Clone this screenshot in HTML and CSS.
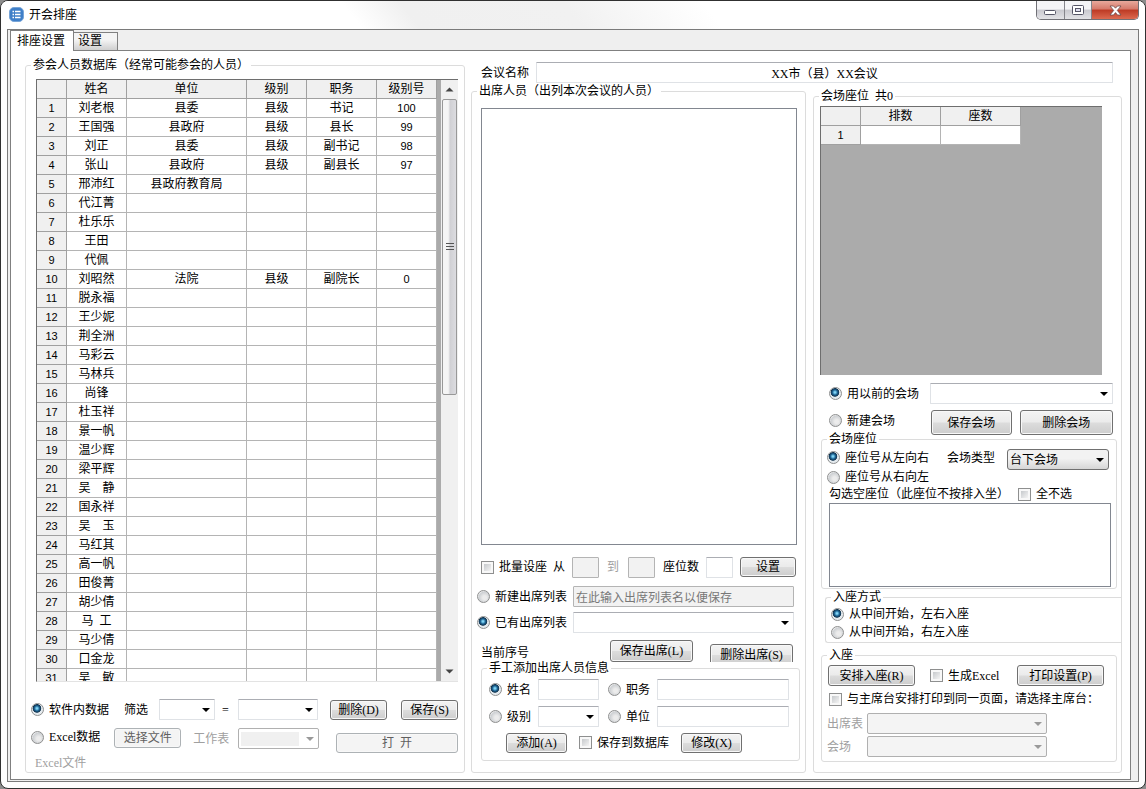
FILE: index.html
```html
<!DOCTYPE html>
<html lang="zh-CN">
<head>
<meta charset="utf-8">
<title>开会排座</title>
<link rel="stylesheet" href="styles.css">
</head>
<body>
<div class="window">
  <header class="titlebar">
    <svg class="app-icon" width="15" height="15" viewBox="0 0 15 15"><rect x="0.5" y="0.5" width="14" height="14" rx="4.5" fill="#3f7fc8" stroke="#78a5d8"/><path d="M6 4.5h5.500M6 7.500h5.500M6 10.500h5.500" stroke="#fff" stroke-width="1.300"/><path d="M3.500 4.500h1.500M3.500 7.500h1.500M3.500 10.500h1.500" stroke="#fff" stroke-width="1.300"/></svg>
    <h1 class="title">开会排座</h1>
    <div class="window-buttons">
      <button class="wbtn wbtn-min" aria-label="最小化"><svg width="13" height="7" viewBox="0 0 13 7"><rect x="0.500" y="1.500" width="11" height="4" rx="1" fill="#fff" stroke="#556"/></svg></button>
      <button class="wbtn wbtn-max" aria-label="最大化"><svg width="13" height="11" viewBox="0 0 13 11"><rect x="0.500" y="0.500" width="11" height="9" rx="1" fill="#fff" stroke="#556"/><rect x="3.500" y="3.500" width="5" height="3" fill="#dde" stroke="#556"/></svg></button>
      <button class="wbtn wbtn-close" aria-label="关闭"><svg width="13" height="11" viewBox="0 0 13 11"><path d="M1 1h3.500l2 2.200L8.500 1H12L8.300 5.400 12 10H8.500l-2-2.400L4.500 10H1l3.700-4.600z" fill="#fff" stroke="#6b4a4a" stroke-width="0.800"/></svg></button>
    </div>
  </header>
  <main class="client">
    <div class="tabs" role="tablist">
      <button class="tab tab-active" role="tab" aria-selected="true">排座设置</button>
      <button class="tab" role="tab" aria-selected="false">设置</button>
    </div>
    <div class="pane" role="tabpanel">
      <fieldset class="group database">
        <legend>参会人员数据库（经常可能参会的人员）</legend>
        <div class="grid-frame people-frame">
          <table class="sheet people">
            <colgroup><col class="c30"><col class="c60"><col class="c120"><col class="c60"><col class="c70"><col class="c60"></colgroup>
            <thead><tr><th></th><th>姓名</th><th>单位</th><th>级别</th><th>职务</th><th>级别号</th></tr></thead>
            <tbody>
              <tr><th>1</th><td>刘老根</td><td>县委</td><td>县级</td><td>书记</td><td class="num">100</td></tr>
              <tr><th>2</th><td>王国强</td><td>县政府</td><td>县级</td><td>县长</td><td class="num">99</td></tr>
              <tr><th>3</th><td>刘正</td><td>县委</td><td>县级</td><td>副书记</td><td class="num">98</td></tr>
              <tr><th>4</th><td>张山</td><td>县政府</td><td>县级</td><td>副县长</td><td class="num">97</td></tr>
              <tr><th>5</th><td>邢沛红</td><td>县政府教育局</td><td></td><td></td><td></td></tr>
              <tr><th>6</th><td>代江菁</td><td></td><td></td><td></td><td></td></tr>
              <tr><th>7</th><td>杜乐乐</td><td></td><td></td><td></td><td></td></tr>
              <tr><th>8</th><td>王田</td><td></td><td></td><td></td><td></td></tr>
              <tr><th>9</th><td>代佩</td><td></td><td></td><td></td><td></td></tr>
              <tr><th>10</th><td>刘昭然</td><td>法院</td><td>县级</td><td>副院长</td><td class="num">0</td></tr>
              <tr><th>11</th><td>脱永福</td><td></td><td></td><td></td><td></td></tr>
              <tr><th>12</th><td>王少妮</td><td></td><td></td><td></td><td></td></tr>
              <tr><th>13</th><td>荆全洲</td><td></td><td></td><td></td><td></td></tr>
              <tr><th>14</th><td>马彩云</td><td></td><td></td><td></td><td></td></tr>
              <tr><th>15</th><td>马林兵</td><td></td><td></td><td></td><td></td></tr>
              <tr><th>16</th><td>尚锋</td><td></td><td></td><td></td><td></td></tr>
              <tr><th>17</th><td>杜玉祥</td><td></td><td></td><td></td><td></td></tr>
              <tr><th>18</th><td>景一帆</td><td></td><td></td><td></td><td></td></tr>
              <tr><th>19</th><td>温少辉</td><td></td><td></td><td></td><td></td></tr>
              <tr><th>20</th><td>梁平辉</td><td></td><td></td><td></td><td></td></tr>
              <tr><th>21</th><td>吴　静</td><td></td><td></td><td></td><td></td></tr>
              <tr><th>22</th><td>国永祥</td><td></td><td></td><td></td><td></td></tr>
              <tr><th>23</th><td>吴　玉</td><td></td><td></td><td></td><td></td></tr>
              <tr><th>24</th><td>马红其</td><td></td><td></td><td></td><td></td></tr>
              <tr><th>25</th><td>高一帆</td><td></td><td></td><td></td><td></td></tr>
              <tr><th>26</th><td>田俊菁</td><td></td><td></td><td></td><td></td></tr>
              <tr><th>27</th><td>胡少倩</td><td></td><td></td><td></td><td></td></tr>
              <tr><th>28</th><td>马&nbsp; 工</td><td></td><td></td><td></td><td></td></tr>
              <tr><th>29</th><td>马少倩</td><td></td><td></td><td></td><td></td></tr>
              <tr><th>30</th><td>口金龙</td><td></td><td></td><td></td><td></td></tr>
              <tr><th>31</th><td>吴　敏</td><td></td><td></td><td></td><td></td></tr>
            </tbody>
          </table>
          <div class="scrollbar" aria-hidden="true">
            <svg class="sb-arrow" width="9" height="5" viewBox="0 0 9 5"><path d="M0.500 4.500L4.500 0.500l4 4z" fill="#444"/></svg>
            <div class="sb-thumb"><svg width="8" height="9" viewBox="0 0 8 9"><path d="M0 1.500h8M0 4.500h8M0 7.500h8" stroke="#555"/></svg></div>
            <div class="sb-rest"></div>
            <svg class="sb-arrow" width="9" height="5" viewBox="0 0 9 5"><path d="M0.500 0.500L4.500 4.500l4-4z" fill="#444"/></svg>
          </div>
        </div>
        <div class="row source-row">
          <label class="opt"><input type="radio" name="source" checked>软件内数据</label>
          <label class="filter-label" for="filter-field">筛选</label>
          <select id="filter-field" class="w56"></select>
          <span class="equals">=</span>
          <select id="filter-value" class="grow" aria-label="筛选值"></select>
          <button class="btn w57 gap-l">删除(D)</button>
          <button class="btn w57 gap-l2">保存(S)</button>
        </div>
        <div class="row excel-row">
          <label class="opt"><input type="radio" name="source">Excel数据</label>
          <button class="btn w67 gap-l2" disabled>选择文件</button>
          <label class="muted sheet-label" for="sheet">工作表</label>
          <select id="sheet" class="grow boxed" disabled></select>
          <button class="btn open-btn" disabled>打&nbsp; 开</button>
        </div>
        <div class="muted excel-file">Excel文件</div>
      </fieldset>

      <div class="meeting">
        <div class="row name-row">
          <label for="meeting-name">会议名称</label>
          <input id="meeting-name" class="grow name-input" type="text" value="XX市（县）XX会议">
        </div>
        <div class="meeting-columns">
          <fieldset class="group attend">
            <legend>出席人员（出列本次会议的人员）</legend>
            <div class="listbox attend-list" role="listbox" aria-label="出席人员"></div>
            <div class="row batch-row">
              <label class="opt"><input type="checkbox">批量设座</label>
              <label class="from" for="seat-from">从</label>
              <input id="seat-from" class="w27" type="text" disabled>
              <label class="muted to" for="seat-to">到</label>
              <input id="seat-to" class="w27" type="text" disabled>
              <label class="count" for="seat-count">座位数</label>
              <input id="seat-count" class="w27" type="text">
              <button class="btn grow set-btn">设置</button>
            </div>
            <div class="row new-list-row">
              <label class="opt"><input type="radio" name="list">新建出席列表</label>
              <input class="grow hint" type="text" value="在此输入出席列表名以便保存" aria-label="出席列表名" disabled>
            </div>
            <div class="row old-list-row">
              <label class="opt"><input type="radio" name="list" checked>已有出席列表</label>
              <select class="grow" aria-label="已有出席列表"></select>
            </div>
            <div class="row current-row">
              <span class="grow current">当前序号</span>
              <button class="btn w83">保存出席(L)</button>
              <button class="btn w83 cut">删除出席(S)</button>
            </div>
            <fieldset class="group manual">
              <legend>手工添加出席人员信息</legend>
              <div class="manual-grid">
                <label class="opt"><input type="radio" name="manual" checked>姓名</label>
                <input type="text" aria-label="姓名">
                <label class="opt second"><input type="radio" name="manual">职务</label>
                <input type="text" aria-label="职务">
                <label class="opt"><input type="radio" name="manual">级别</label>
                <select aria-label="级别"></select>
                <label class="opt second"><input type="radio" name="manual">单位</label>
                <input type="text" aria-label="单位">
              </div>
              <div class="row manual-actions">
                <button class="btn w61">添加(A)</button>
                <label class="opt"><input type="checkbox">保存到数据库</label>
                <button class="btn w61">修改(X)</button>
              </div>
            </fieldset>
          </fieldset>

          <fieldset class="group venue">
            <legend>会场座位&nbsp; 共0</legend>
            <div class="grid-frame venue-frame">
              <table class="sheet">
                <colgroup><col class="c40"><col class="c80"><col class="c80"></colgroup>
                <thead><tr><th></th><th>排数</th><th>座数</th></tr></thead>
                <tbody><tr><th>1</th><td></td><td></td></tr></tbody>
              </table>
            </div>
            <div class="row old-venue-row">
              <label class="opt"><input type="radio" name="venue" checked>用以前的会场</label>
              <select class="grow" aria-label="以前的会场"></select>
            </div>
            <div class="row new-venue-row">
              <label class="opt"><input type="radio" name="venue">新建会场</label>
              <button class="btn tall save-venue">保存会场</button>
              <button class="btn tall del-venue">删除会场</button>
            </div>
            <fieldset class="group seats">
              <legend>会场座位</legend>
              <div class="row dir-row">
                <label class="opt"><input type="radio" name="dir" checked>座位号从左向右</label>
                <label class="type-label" for="venue-type">会场类型</label>
                <select id="venue-type" class="grow raised"><option>台下会场</option></select>
              </div>
              <label class="opt dir-second"><input type="radio" name="dir">座位号从右向左</label>
              <div class="row empty-row">
                <span>勾选空座位（此座位不按排入坐）</span>
                <label class="opt"><input type="checkbox">全不选</label>
              </div>
              <div class="listbox seat-list" role="listbox" aria-label="空座位"></div>
            </fieldset>
            <fieldset class="group method">
              <legend>入座方式</legend>
              <label class="opt"><input type="radio" name="method" checked>从中间开始，左右入座</label>
              <label class="opt"><input type="radio" name="method">从中间开始，右左入座</label>
            </fieldset>
            <fieldset class="group seating">
              <legend>入座</legend>
              <div class="row seating-actions">
                <button class="btn w87">安排入座(R)</button>
                <label class="opt"><input type="checkbox">生成Excel</label>
                <button class="btn w87 print-btn">打印设置(P)</button>
              </div>
              <label class="opt same-page"><input type="checkbox">与主席台安排打印到同一页面，请选择主席台：</label>
              <div class="stage-grid">
                <label class="muted" for="stage-list">出席表</label>
                <select id="stage-list" disabled></select>
                <label class="muted" for="stage-venue">会场</label>
                <select id="stage-venue" disabled></select>
              </div>
            </fieldset>
          </fieldset>
        </div>
      </div>
    </div>
  </main>
</div>
</body>
</html>
```
FILE: styles.css
```css
* { box-sizing: border-box; }

body {
  margin: 0;
  background: #8c8c8c;
  color: #000;
  font: 12px/16px "Liberation Serif", "Noto Sans CJK SC", sans-serif;
}

button, input, select { font: inherit; color: inherit; margin: 0; }

/* window frame */
.window {
  display: flex;
  flex-direction: column;
  height: 100vh;
  min-height: 740px;
  min-width: 1100px;
  border: 1px solid #303030;
  border-radius: 8px;
  background: #fdfdfd;
  overflow: hidden;
}
.titlebar {
  display: flex;
  align-items: flex-start;
  height: 28px;
  padding: 0 6px 0 8px;
  background: linear-gradient(52deg, #fff 0 31%, #f0f0f0 36%, #f1f1f1 50%, #fff 62%);
}
.app-icon { margin-top: 6px; }
.title { flex: 1; margin: 5px 0 0 5px; font-size: 12px; font-weight: normal; line-height: 18px; }
.window-buttons {
  display: flex;
  height: 19px;
  border: 1px solid #707076;
  border-top: 0;
  border-radius: 0 0 5px 5px;
  overflow: hidden;
}
.wbtn {
  display: flex;
  align-items: center;
  justify-content: center;
  width: 27px;
  padding: 0;
  border: 0;
  border-right: 1px solid #85858b;
  background: linear-gradient(#f4f4f6 0 45%, #c9c9cf 50%, #e2e2e6);
}
.wbtn-min { width: 28px; padding-top: 4px; }
.wbtn-close { width: 46px; border-right: 0; background: linear-gradient(#e8a99c, #d5796a 45%, #bd3a24 50%, #dc6a50); }

.client {
  flex: 1;
  display: flex;
  flex-direction: column;
  min-height: 0;
  margin: 0 6px 6px;
  padding: 0 7px 1px 2px;
  border: 1px solid #7a7a7a;
  background: #efefef;
}
.tabs { display: flex; align-items: flex-end; height: 21px; margin-bottom: -1px; }
.tab {
  width: 44px;
  height: 19px;
  padding: 0 0 0 4px;
  border: 1px solid #808080;
  border-left: 0;
  background: linear-gradient(#f4f4f4 0 40%, #cfcfcf);
  line-height: 17px;
  text-align: left;
  white-space: nowrap;
}
.tab-active { width: 64px; height: 21px; padding: 0 0 0 6px; border-bottom: 0; border-left: 1px solid #808080; background: #fff; z-index: 1; }

.pane {
  flex: 1;
  display: grid;
  grid-template-columns: 440fr 651fr;
  grid-template-rows: minmax(0, 1fr);
  column-gap: 6px;
  min-height: 0;
  padding: 0 8px 6px 14px;
  border: 1px solid #808080;
  background: #fff;
}

/* group boxes */
.group {
  display: flex;
  flex-direction: column;
  min-width: 0;
  margin: 0;
  padding: 0 5px;
  border: 1px solid #dcdcdc;
  border-radius: 3px;
}
legend { padding: 0 2px; line-height: 16px; }

.row { display: flex; align-items: center; white-space: nowrap; }
.grow { flex: 1; min-width: 0; }
.opt { display: flex; align-items: center; gap: 5px; white-space: nowrap; }
.muted { color: #a0a0a0; }

/* controls */
input[type="radio"], input[type="checkbox"] {
  appearance: none;
  flex: none;
  width: 13px;
  height: 13px;
  border: 1px solid #8e8f8f;
}
input[type="radio"] {
  border-radius: 50%;
  background: radial-gradient(circle at 60% 60%, #ececec 20%, #cdd0d3 60%, #f4f4f4 75%);
}
input[type="radio"]:checked {
  background: radial-gradient(circle at 45% 40%, #7fd4f5 0 8%, #1c6393 28%, #12344f 44%, #e4eaee 52%);
}
input[type="checkbox"] {
  background: linear-gradient(135deg, #c6c9cc, #f4f4f4) content-box, #f8f8f8;
  padding: 2px;
}
input[type="text"], select {
  height: 21px;
  border: 1px solid #dfe2e6;
  border-top-color: #abadb3;
  border-radius: 1px;
  background-color: #fff;
  padding: 0 2px;
}
input[type="text"]:disabled { border-color: #b4b4b4; background: #f2f2f2; color: #787878; }
select {
  appearance: none;
  background-image: url("data:image/svg+xml,%3Csvg xmlns='http://www.w3.org/2000/svg' width='8' height='4'%3E%3Cpath d='M0 0h8L4 4z' fill='%23000'/%3E%3C/svg%3E");
  background-repeat: no-repeat;
  background-position: right 4px center;
}
select:disabled {
  opacity: 1;
  border-color: #b0b0b0;
  border-radius: 2px;
  background-color: #f4f4f4;
  background-image: url("data:image/svg+xml,%3Csvg xmlns='http://www.w3.org/2000/svg' width='8' height='4'%3E%3Cpath d='M0 0h8L4 4z' fill='%23999'/%3E%3C/svg%3E");
}
.boxed:disabled {
  background-color: #fff;
  background-image:
    url("data:image/svg+xml,%3Csvg xmlns='http://www.w3.org/2000/svg' width='8' height='4'%3E%3Cpath d='M0 0h8L4 4z' fill='%23999'/%3E%3C/svg%3E"),
    linear-gradient(#f0f0f0, #f0f0f0);
  background-size: 8px 4px, calc(100% - 21px) 14px;
  background-position: right 4px center, 2px center;
}
select.raised {
  border-color: #707070;
  border-radius: 3px;
  background-image: url("data:image/svg+xml,%3Csvg xmlns='http://www.w3.org/2000/svg' width='8' height='4'%3E%3Cpath d='M0 0h8L4 4z' fill='%23000'/%3E%3C/svg%3E"), linear-gradient(#f2f2f2 0 45%, #d6d6d6);
  background-position: right 4px center, 0 0;
}
.btn {
  flex: none;
  height: 20px;
  padding: 0;
  border: 1px solid #707070;
  border-radius: 3px;
  background: linear-gradient(#f3f3f3, #ebebeb 48%, #dcdcdc 52%, #cdcdcd);
  box-shadow: inset 0 0 0 1px #f8f8f8;
  line-height: 18px;
  white-space: nowrap;
}
.btn:disabled { border-color: #adb2b5; background: #f4f4f4; color: #606060; }
.btn.grow { flex: 1; }
.tall { height: 25px; }
.w27 { width: 27px; }
.w56 { width: 56px; }
.w57 { width: 57px; }
.w61 { width: 61px; }
.w67 { width: 67px; }
.w83 { width: 83px; }
.w87 { width: 87px; }
.gap-l { margin-left: 12px; }
.gap-l2 { margin-left: 14px; }
.listbox { border: 1px solid #828790; background: #fff; }

/* data sheets */
.grid-frame {
  display: flex;
  align-items: flex-start;
  border: solid #6e6e6e;
  border-width: 1px 0 0 1px;
  background: #ababab;
  overflow: hidden;
}
.sheet { table-layout: fixed; border-collapse: separate; border-spacing: 0; background: #fff; text-align: center; }
.sheet th, .sheet td {
  height: 19px;
  padding: 0;
  border: solid #b4b4b4;
  border-width: 0 1px 1px 0;
  font-weight: normal;
  line-height: 18px;
  white-space: nowrap;
}
.sheet th { background: #f0f0f0; border-color: #a0a0a0; }
.sheet tbody th, .sheet .num { font-family: "Liberation Sans", sans-serif; font-size: 11px; }
.c30 { width: 30px; }
.c40 { width: 40px; }
.c60 { width: 60px; }
.c70 { width: 70px; }
.c80 { width: 80px; }
.c120 { width: 120px; }

.scrollbar {
  display: flex;
  flex-direction: column;
  align-items: center;
  align-self: stretch;
  flex: none;
  width: 17px;
  margin-left: 4px;
  background: #f0f0f0;
}
.sb-arrow { flex: none; margin: 7px 0; }
.sb-thumb {
  flex: 296;
  display: flex;
  align-items: center;
  justify-content: center;
  width: 15px;
  border: 1px solid #989898;
  border-radius: 2px;
  background: linear-gradient(90deg, #f5f5f5 0 40%, #d0d0d4 55%, #dcdce0);
}
.sb-rest { flex: 269; }

/* people database */
.database { min-height: 0; margin-top: 6px; }
.people-frame { flex: 1; min-height: 200px; margin: 6px 1px 0 5px; border-bottom: 1px solid #e3e3e3; }
.people { flex: 1; }
.source-row { flex: none; height: 21px; margin: 17px 1px 0 0; }
.filter-label { margin: 0 11px 0 15px; }
.equals { margin: 0 9px 0 7px; }
.excel-row { flex: none; height: 25px; margin: 8px 1px 0 0; align-items: flex-start; }
.excel-row .opt { height: 18px; }
.sheet-label { margin: 3px 9px 0 12px; }
.open-btn { align-self: flex-end; width: 122px; margin-left: 17px; }
.excel-file { flex: none; margin: 2px 0 1px 4px; }

/* meeting area */
.meeting { display: flex; flex-direction: column; min-width: 0; min-height: 0; }
.name-row { padding: 11px 9px 0 10px; gap: 7px; }
.name-input { text-align: center; }
.meeting-columns { flex: 1; display: grid; grid-template-columns: 335fr 309fr; column-gap: 7px; min-height: 0; }
.meeting-columns > .group { min-height: 0; }

.attend { padding-bottom: 11px; }
.attend-list { flex: 1; min-height: 100px; margin: 9px 3px 0 4px; }
.batch-row { height: 22px; margin: 11px 4px 0; }
.from { margin: 0 7px 0 6px; }
.to { margin: 0 9px 0 8px; }
.count { margin: 0 7px 0 8px; }
.set-btn { margin-left: 7px; }
.new-list-row { height: 21px; margin: 8px 6px 0 0; gap: 6px; }
.old-list-row { height: 21px; margin: 5px 6px 0 0; gap: 6px; }
.current-row { height: 22px; margin: 7px 7px 0 4px; align-items: flex-start; gap: 17px; overflow: hidden; }
.current-row .btn { height: 22px; }
.current { padding-top: 5px; }
.cut { margin-top: 4px; }

.manual { margin: -2px 0 0 4px; padding: 0 10px 7px 7px; }
.manual legend { margin-left: -2px; }
.manual-grid {
  display: grid;
  grid-template-columns: 42px 61px 44px 1fr;
  grid-auto-rows: 21px;
  gap: 6px 7px;
  margin-top: 3px;
  align-items: center;
}
.manual-grid input[type="text"], .manual-grid select { width: 100%; min-width: 0; }
.second { margin-left: 2px; }
.manual-actions { height: 21px; margin: 5px 0 0 17px; gap: 12px; }

/* venue area */
.venue { margin-top: 5px; padding: 0 0 10px 5px; }
.venue-frame { flex: 1; min-height: 60px; margin: 2px 19px 0 1px; }
.old-venue-row { height: 21px; margin: 8px 8px 0 10px; gap: 11px; }
.new-venue-row { height: 25px; margin: 6px 8px 0 10px; gap: 8px; align-items: flex-start; }
.new-venue-row .opt { width: 94px; height: 21px; }
.save-venue { flex: 80; }
.del-venue { flex: 93; }
.seats { margin: -4px 4px 0 2px; padding-bottom: 1px; }
.dir-row { height: 21px; margin: 2px 2px 0 0; align-items: flex-start; }
.dir-row .opt { height: 17px; }
.type-label { margin: 1px 12px 0 18px; }
.dir-second { height: 14px; }
.empty-row { height: 16px; margin: 2px 0 0 2px; gap: 9px; }
.seat-list { height: 84px; margin: 1px 0 0 2px; }
.method { margin-left: 6px; padding-bottom: 1px; border-right: 0; border-radius: 3px 0 0 3px; }
.method .opt { height: 18px; }
.seating { margin: 4px 4px 0 2px; padding-bottom: 4px; }
.seating-actions { height: 21px; margin: 2px 7px 0 1px; gap: 15px; }
.seating-actions .btn { height: 21px; }
.print-btn { margin-left: auto; }
.same-page { height: 16px; margin: 5px 0 0 2px; }
.stage-grid {
  display: grid;
  grid-template-columns: 36px minmax(0, 180px);
  grid-auto-rows: 21px;
  gap: 2px 4px;
  margin-top: 6px;
  align-items: center;
}
```
